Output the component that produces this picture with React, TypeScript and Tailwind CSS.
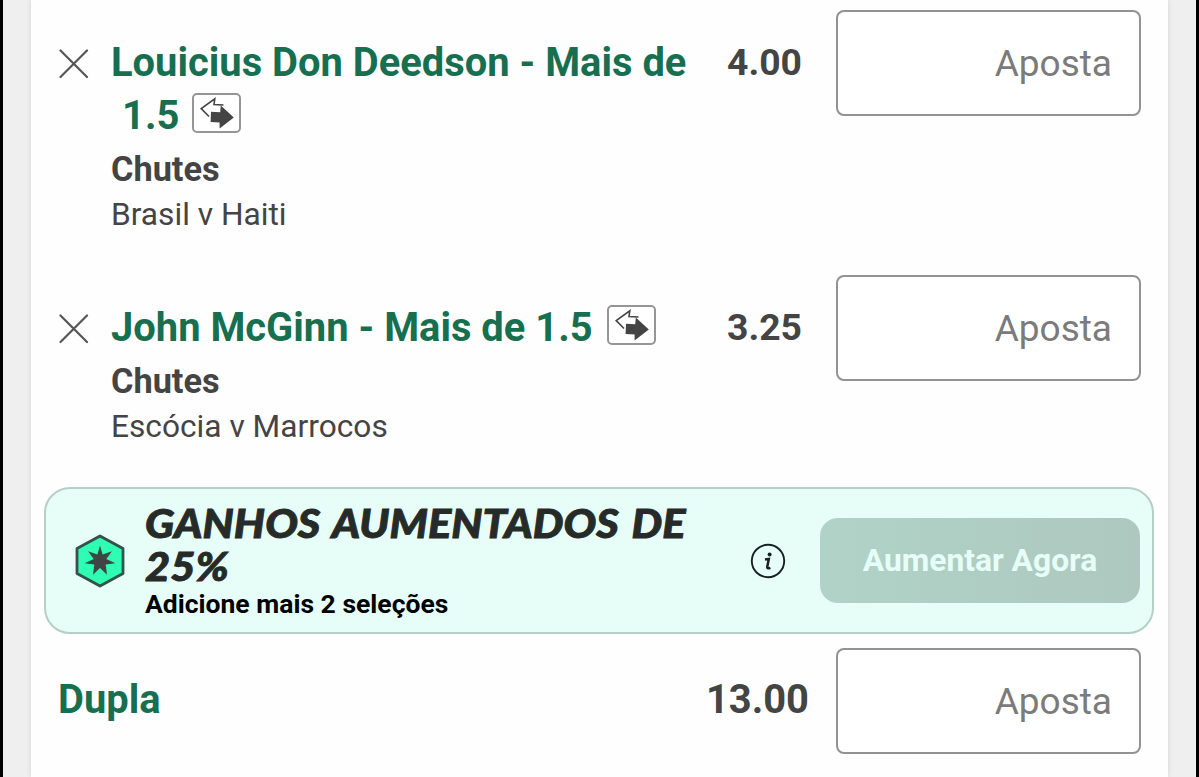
import type { ReactNode } from "react";

function CloseIcon() {
  return (
    <svg width="30" height="30" viewBox="0 0 30 30" className="block" fill="none" stroke="#555" strokeWidth="2.2" strokeLinecap="round">
      <path d="M1.5 1.5 28 28M28 1.5 1.5 28" />
    </svg>
  );
}

function SwapBadge() {
  return (
    <span className="mb-[5px] flex h-10 w-[49px] shrink-0 items-center justify-center rounded-[5px] border-2 border-[#959595] bg-white">
      <svg width="45" height="36" viewBox="0 0 45 36" className="block">
        <path d="M15 21.5 7.2 13.5 20.8 3.8 20 9.6 29.5 10" fill="none" stroke="#444" strokeWidth="1.6" />
        <path d="M17 16.8 26.2 17.2 26.8 10.5 39.8 22.5 25.6 33.5V27.5L16.6 27Z" fill="#444" />
      </svg>
    </span>
  );
}

function BoostIcon() {
  return (
    <svg width="50" height="54" viewBox="0 0 50 54" className="block">
      <path d="M25 2 48 14.5V39.5L25 52 2 39.5V14.5Z" fill="#2ffdb4" stroke="#34524a" strokeWidth="2.8" strokeLinejoin="round" />
      {/* seven-pointed star */}
      <path
        d="M25 11.5 27.6 20.4 37 17.3 31.3 25 40.3 29.3 30.7 30.6 32 40.8 25 34 18 40.8 19.3 30.6 9.7 29.3 18.7 25 13 17.3 22.4 20.4Z"
        fill="#3d4644"
      />
    </svg>
  );
}

function InfoIcon() {
  return (
    <svg width="36" height="36" viewBox="0 0 36 36" className="block">
      <circle cx="18" cy="18" r="16.2" fill="none" stroke="#17221f" strokeWidth="1.9" />
      <circle cx="19.6" cy="11.4" r="2" fill="#17221f" />
      <path d="M15 16.6 18.8 16 17.2 24.2Q17.2 26 20.4 24.8" fill="none" stroke="#17221f" strokeWidth="2.5" />
    </svg>
  );
}

function StakeInput() {
  return (
    <input
      aria-label="Aposta"
      placeholder="Aposta"
      className="block h-[106px] w-[305px] shrink-0 rounded-[8px] border-2 border-[#929292] bg-white pr-[27px] text-right text-[37px] text-[#444] placeholder:text-[#7b7b7b] placeholder:opacity-100"
    />
  );
}

type SelectionProps = {
  title: ReactNode;
  market: string;
  event: string;
  odds: string;
};

function Selection({ title, market, event, odds }: SelectionProps) {
  return (
    <div className="flex h-[265px] items-start">
      <div className="w-[52px] shrink-0 pt-[39px]">
        <CloseIcon />
      </div>
      <div className="w-[611px] shrink-0 pt-[26px]">
        <div className="text-[39.9px] leading-[53px] font-bold whitespace-nowrap text-[#176f50]">{title}</div>
        <div className="mt-1 text-[34.3px] leading-[46px] font-bold text-[#444]">{market}</div>
        <div className="text-[31.7px] leading-[45px] text-[#444]">{event}</div>
      </div>
      <div className="w-[80px] shrink-0 pt-[26px] text-right text-[37.3px] leading-[53px] font-bold text-[#444]">{odds}</div>
      <div className="ml-auto">
        <StakeInput />
      </div>
    </div>
  );
}

export default function App() {
  return (
    <div className="flex h-[777px] w-[1199px] overflow-hidden border-x-[3px] border-black bg-[#efefef] pl-[28px] font-['Roboto','Liberation_Sans',sans-serif]">
      <main className="h-full w-[1137px] bg-[#fefefe] pt-[10px] pr-[14px] pl-[13px] shadow-[0_0_5px_rgba(0,0,0,0.12)]">
        <div className="pr-[13px] pl-[15px]">
          <Selection
            title={
              <>
                <div>Louicius Don Deedson - Mais de</div>
                <div className="flex h-[53px] items-center pl-[11px]">
                  <span className="mr-[13px]">1.5</span>
                  <SwapBadge />
                </div>
              </>
            }
            market="Chutes"
            event="Brasil v Haiti"
            odds="4.00"
          />
          <Selection
            title={
              <div className="flex h-[53px] items-center">
                <span className="mr-[14px]">John McGinn - Mais de 1.5</span>
                <SwapBadge />
              </div>
            }
            market="Chutes"
            event="Escócia v Marrocos"
            odds="3.25"
          />
        </div>

        {/* Boost offer */}
        <section className="mt-[-53px] flex h-[147px] items-center rounded-[26px] border-2 border-[#b5cfc6] bg-[#e6fef7] pr-[12px] pl-[29px]">
          <BoostIcon />
          <div className="mb-[2px] ml-[20px] w-[605px] shrink-0">
            <h2 className="origin-left scale-x-[1.11] pt-px font-['Lato'] text-[39px] leading-[43px] font-black tracking-[0.1px] text-[#262b29] italic [-webkit-text-stroke:0.9px_#262b29] [word-spacing:3px]">
              <span className="block whitespace-nowrap">GANHOS AUMENTADOS DE</span>
              <span className="block">25%</span>
            </h2>
            <p className="text-[26.5px] leading-[31px] font-bold text-black">Adicione mais 2 seleções</p>
          </div>
          <InfoIcon />
          <button className="ml-auto h-[85px] w-[320px] rounded-[18px] bg-linear-to-r from-[#b0d3c7] to-[#aec8bf] text-[31.8px] font-bold text-[#e6fef7]">
            Aumentar Agora
          </button>
        </section>

        <div className="mt-[14px] flex items-start pr-[13px] pl-[14px]">
          <div className="pt-[25px] text-[39.9px] leading-[53px] font-bold text-[#176f50]">Dupla</div>
          <div className="mr-[27px] ml-auto pt-[25px] text-[39.9px] leading-[53px] font-bold text-[#444]">13.00</div>
          <StakeInput />
        </div>
      </main>
    </div>
  );
}
